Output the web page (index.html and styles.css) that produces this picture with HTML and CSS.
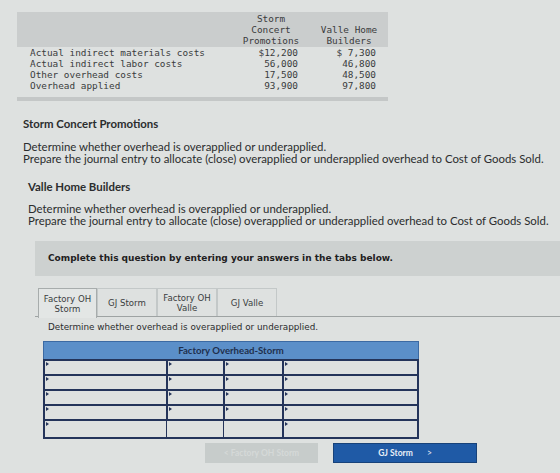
FILE: index.html
```html
<!DOCTYPE html>
<html lang="en">
<head>
    <meta charset="UTF-8">
    <meta name="viewport" content="width=device-width, initial-scale=1.0">
    <title>Applied Overhead</title>
    <link rel="stylesheet" href="styles.css">
</head>
<body>
    <table class="costs">
        <thead>
            <tr>
                <th></th>
                <th class="num">Storm<br>Concert<br>Promotions</th>
                <th class="num">Valle Home<br>Builders</th>
            </tr>
        </thead>
        <tbody>
            <tr><td>Actual indirect materials costs</td><td class="amt">$12,200</td><td class="amt">$ 7,300</td></tr>
            <tr><td>Actual indirect labor costs</td><td class="amt">56,000</td><td class="amt">46,800</td></tr>
            <tr><td>Other overhead costs</td><td class="amt">17,500</td><td class="amt">48,500</td></tr>
            <tr><td>Overhead applied</td><td class="amt">93,900</td><td class="amt">97,800</td></tr>
        </tbody>
    </table>

    <div class="task">
        <h3>Storm Concert Promotions</h3>
        <p>Determine whether overhead is overapplied or underapplied.<br>
        Prepare the journal entry to allocate (close) overapplied or underapplied overhead to Cost of Goods Sold.</p>
    </div>
    <div class="task">
        <h3>Valle Home Builders</h3>
        <p>Determine whether overhead is overapplied or underapplied.<br>
        Prepare the journal entry to allocate (close) overapplied or underapplied overhead to Cost of Goods Sold.</p>
    </div>

    <div class="question">
        <div class="banner">Complete this question by entering your answers in the tabs below.</div>
        <div class="tabs">
            <div class="tab active">Factory OH<br>Storm</div>
            <div class="tab">GJ Storm</div>
            <div class="tab">Factory OH<br>Valle</div>
            <div class="tab">GJ Valle</div>
        </div>
        <p class="prompt">Determine whether overhead is overapplied or underapplied.</p>

        <div class="taccount">
            <div class="ta-head">Factory Overhead-Storm</div>
            <div class="ta-grid">
                <div class="cell wide drop"></div><div class="cell drop"></div><div class="cell drop"></div><div class="cell drop"></div>
                <div class="cell wide drop"></div><div class="cell drop"></div><div class="cell drop"></div><div class="cell drop"></div>
                <div class="cell wide drop"></div><div class="cell drop"></div><div class="cell drop"></div><div class="cell drop"></div>
                <div class="cell wide drop"></div><div class="cell drop"></div><div class="cell drop"></div><div class="cell drop"></div>
                <div class="cell wide drop last"></div><div class="cell last"></div><div class="cell last"></div><div class="cell drop last"></div>
            </div>
        </div>

        <div class="nav">
            <button class="btn prev">&lt; Factory OH Storm</button>
            <button class="btn next">GJ Storm <span class="chev">&gt;</span></button>
        </div>
    </div>
</body>
</html>
```

FILE: styles.css
```css
* {
    box-sizing: border-box;
}
body {
    margin: 0;
    background-color: #dee1e0;
    color: #2b2d2e;
    font-family: Lato, "Open Sans", sans-serif;
}

/* cost data table */
.costs {
    margin: 12px 0 0 17px;
    width: 371px;
    border-collapse: collapse;
    font-family: "DejaVu Sans Mono", monospace;
    font-size: 9.4px;
    line-height: 11px;
    color: #3a3c3d;
    border-bottom: 4px solid #c4c7c7;
}
.costs thead tr {
    background-color: #cacdcd;
}
.costs th {
    font-weight: normal;
    vertical-align: bottom;
    padding: 1px 0 1px;
}
.costs th.num {
    text-align: center;
}
.costs td {
    padding: 0;
}
.costs td:first-child {
    padding-left: 13px;
    width: 215px;
}
.costs td.amt {
    text-align: right;
    padding-right: 12px;
}
.costs tbody tr:last-child td {
    padding-bottom: 6px;
}

/* company tasks */
.task {
    padding-left: 23px;
}
.task h3 {
    margin: 0;
    font-size: 11.4px;
    line-height: 14px;
    font-weight: bold;
}
.task p {
    margin: 0;
    font-size: 11.4px;
    line-height: 12px;
}
.task:first-of-type {
    margin-top: 16px;
}
.task:first-of-type p {
    margin-top: 10px;
}
.task + .task {
    margin-top: 15px;
    padding-left: 28px;
}
.task + .task p {
    margin-top: 9px;
    line-height: 11.5px;
}

/* answer area */
.question {
    margin: 15px 0 0 35px;
    font-family: "DejaVu Sans", Verdana, sans-serif;
}
.banner {
    background-color: #cdd1d0;
    padding: 12px 13px 0;
    font-size: 9px;
    font-weight: bold;
    color: #1e2021;
    height: 35px;
}
.tabs {
    display: flex;
    margin-top: 12px;
    padding-left: 3px;
    border-bottom: 1px solid #9ea3a3;
    height: 29px;
}
.tab {
    width: 60px;
    display: flex;
    align-items: center;
    justify-content: center;
    text-align: center;
    font-size: 8.6px;
    line-height: 10px;
    color: #3a3d3e;
    border: 1px solid #c3c8c8;
    border-bottom: none;
}
.tab.active {
    border-color: #a7acac;
    background-color: #e3e6e5;
    height: 30px;
    width: 59px;
}
.prompt {
    margin: 5px 0 0 13px;
    font-size: 8.8px;
    line-height: 11px;
    color: #2a2c2d;
}

/* T-account */
.taccount {
    margin: 8px 0 0 8px;
    width: 376px;
}
.ta-head {
    background-color: #5b8fc9;
    text-align: center;
    font-family: Lato, sans-serif;
    font-weight: bold;
    font-size: 9.6px;
    line-height: 17px;
    color: #1f2f4d;
    border: 1px solid #3c6aa3;
    border-bottom: none;
}
.ta-grid {
    display: grid;
    grid-template-columns: 121px 57px 59px 1fr;
    border-left: 2px solid #24345a;
    border-right: 2px solid #24345a;
}
.cell {
    height: 15px;
    border-top: 2px solid #24345a;
    border-left: 2px solid #24345a;
    position: relative;
}
.cell.wide {
    border-left: none;
}
.cell.last {
    height: 20px;
    border-bottom: 2px solid #24345a;
}
.cell.last:not(.drop) {
    border-left-width: 1px;
}
/* little dropdown flag in each input */
.cell.drop::before {
    content: "";
    position: absolute;
    top: 1px;
    left: 1px;
    border-top: 2px solid transparent;
    border-bottom: 2px solid transparent;
    border-left: 3px solid #24345a;
}

.nav {
    display: flex;
    gap: 15px;
    margin: 4px 0 0 170px;
}
.btn {
    height: 20px;
    border: none;
    font-family: Lato, sans-serif;
    font-size: 8.5px;
    font-weight: bold;
}
.btn.prev {
    width: 113px;
    background-color: #c7cccb;
    color: #d5d9d8;
}
.btn.next {
    width: 144px;
    background-color: #1f5aa6;
    color: #e8eef6;
    border: 1px solid #17427a;
}
.chev {
    margin-left: 12px;
    font-weight: normal;
}
```
